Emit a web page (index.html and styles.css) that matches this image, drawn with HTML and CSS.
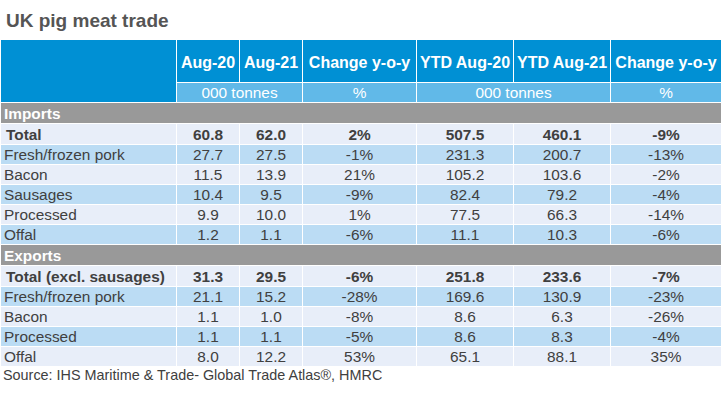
FILE: index.html
```html
<!DOCTYPE html>
<html lang="en">
<head>
<meta charset="utf-8">
<title>UK pig meat trade</title>
<link rel="stylesheet" href="styles.css">
</head>
<body>
<h1 class="title">UK pig meat trade</h1>
<table class="trade">
  <colgroup>
    <col class="c-label"><col class="c-month"><col class="c-month"><col class="c-change">
    <col class="c-ytd"><col class="c-ytd"><col class="c-change2">
  </colgroup>
  <thead>
    <tr class="head">
      <th class="corner" rowspan="2"></th>
      <th>Aug-20</th><th>Aug-21</th><th>Change y-o-y</th>
      <th>YTD Aug-20</th><th>YTD Aug-21</th><th>Change y-o-y</th>
    </tr>
    <tr class="units">
      <td colspan="2">000 tonnes</td><td>%</td>
      <td colspan="2">000 tonnes</td><td>%</td>
    </tr>
  </thead>
  <tbody>
    <tr class="section"><td colspan="7">Imports</td></tr>
    <tr class="total light"><td class="label">Total</td><td>60.8</td><td>62.0</td><td>2%</td><td>507.5</td><td>460.1</td><td>-9%</td></tr>
    <tr class="blue"><td class="label">Fresh/frozen pork</td><td>27.7</td><td>27.5</td><td>-1%</td><td>231.3</td><td>200.7</td><td>-13%</td></tr>
    <tr class="light"><td class="label">Bacon</td><td>11.5</td><td>13.9</td><td>21%</td><td>105.2</td><td>103.6</td><td>-2%</td></tr>
    <tr class="blue"><td class="label">Sausages</td><td>10.4</td><td>9.5</td><td>-9%</td><td>82.4</td><td>79.2</td><td>-4%</td></tr>
    <tr class="light"><td class="label">Processed</td><td>9.9</td><td>10.0</td><td>1%</td><td>77.5</td><td>66.3</td><td>-14%</td></tr>
    <tr class="blue"><td class="label">Offal</td><td>1.2</td><td>1.1</td><td>-6%</td><td>11.1</td><td>10.3</td><td>-6%</td></tr>
    <tr class="section"><td colspan="7">Exports</td></tr>
    <tr class="total light"><td class="label">Total (excl. sausages)</td><td>31.3</td><td>29.5</td><td>-6%</td><td>251.8</td><td>233.6</td><td>-7%</td></tr>
    <tr class="blue"><td class="label">Fresh/frozen pork</td><td>21.1</td><td>15.2</td><td>-28%</td><td>169.6</td><td>130.9</td><td>-23%</td></tr>
    <tr class="light"><td class="label">Bacon</td><td>1.1</td><td>1.0</td><td>-8%</td><td>8.6</td><td>6.3</td><td>-26%</td></tr>
    <tr class="blue"><td class="label">Processed</td><td>1.1</td><td>1.1</td><td>-5%</td><td>8.6</td><td>8.3</td><td>-4%</td></tr>
    <tr class="light"><td class="label">Offal</td><td>8.0</td><td>12.2</td><td>53%</td><td>65.1</td><td>88.1</td><td>35%</td></tr>
  </tbody>
</table>
<p class="source">Source: IHS Maritime &amp; Trade- Global Trade Atlas®, HMRC</p>
</body>
</html>
```

FILE: styles.css
```css
html, body {
  margin: 0;
  padding: 0;
  background: #ffffff;
}

body {
  font-family: "Liberation Sans", Arial, sans-serif;
  color: #404040;
}

.title {
  margin: 0 0 7px 0;
  padding: 10px 0 0 6px;
  font-size: 19px;
  line-height: 22px;
  font-weight: bold;
  color: #555555;
}

.trade {
  width: 722px;
  table-layout: fixed;
  border-collapse: separate;
  border-spacing: 1px;
  background: #ffffff;
  font-size: 15.4px;
}

.c-label { width: 175px; }
.c-month { width: 62px; }
.c-change { width: 113px; }
.c-ytd { width: 96px; }
.c-change2 { width: 110px; }

.trade th,
.trade td {
  padding: 1px 0 0 0;
  height: 18px;
  line-height: 18px;
  text-align: center;
  white-space: nowrap;
  overflow: hidden;
  vertical-align: middle;
}

.head th {
  background: #0090d4;
  color: #ffffff;
  font-size: 16px;
  font-weight: bold;
  height: 40px;
  padding-top: 2px;
  line-height: 19px;
}

.head th.corner {
  padding: 0;
}

.units td {
  background: #61b9e8;
  color: #ffffff;
}

.section td {
  background: #999999;
  color: #ffffff;
  font-weight: bold;
  text-align: left;
  padding-left: 3px;
  height: 19px;
  line-height: 19px;
}

.light td {
  background: #e8eef9;
}

.blue td {
  background: #bbdcf4;
}

.trade td.label {
  text-align: left;
  padding-left: 3px;
}

.total td {
  font-weight: bold;
  height: 19px;
  line-height: 19px;
}

.total td.label {
  padding-left: 5px;
}

.source {
  margin: 0;
  padding: 0 0 0 3px;
  font-size: 14.4px;
  color: #404040;
}
```
